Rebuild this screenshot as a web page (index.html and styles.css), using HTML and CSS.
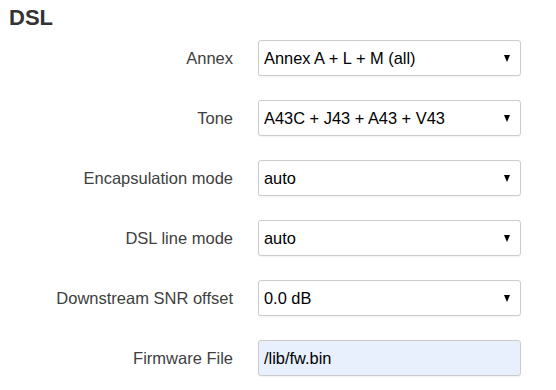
FILE: index.html
```html
<!DOCTYPE html>
<html lang="en">
<head>
    <meta charset="UTF-8">
    <meta name="viewport" content="width=device-width, initial-scale=1.0">
    <title>DSL</title>
    <link rel="stylesheet" href="styles.css">
</head>
<body>
    <div class="section">
        <h3>DSL</h3>

        <div class="field">
            <label class="field-title">Annex</label>
            <div class="select-wrap">
                <select class="field-input">
                    <option>Annex A + L + M (all)</option>
                </select>
            </div>
        </div>

        <div class="field">
            <label class="field-title">Tone</label>
            <div class="select-wrap">
                <select class="field-input">
                    <option>A43C + J43 + A43 + V43</option>
                </select>
            </div>
        </div>

        <div class="field">
            <label class="field-title">Encapsulation mode</label>
            <div class="select-wrap">
                <select class="field-input">
                    <option>auto</option>
                </select>
            </div>
        </div>

        <div class="field">
            <label class="field-title">DSL line mode</label>
            <div class="select-wrap">
                <select class="field-input">
                    <option>auto</option>
                </select>
            </div>
        </div>

        <div class="field">
            <label class="field-title">Downstream SNR offset</label>
            <div class="select-wrap">
                <select class="field-input">
                    <option>0.0 dB</option>
                </select>
            </div>
        </div>

        <div class="field">
            <label class="field-title">Firmware File</label>
            <input class="field-input filled" type="text" value="/lib/fw.bin">
        </div>
    </div>
</body>
</html>
```

FILE: styles.css
```css
body {
    margin: 0;
    padding: 0;
    background: #fff;
    font-family: 'Liberation Sans', Arial, sans-serif;
    color: #404040;
}

.section {
    padding: 4px 0 0 9px;
}

.section h3 {
    margin: 0 0 8px;
    font-size: 22px;
    line-height: 28px;
    font-weight: bold;
    color: #333;
}

.field {
    display: flex;
    align-items: center;
    margin-bottom: 24px;
}

.field-title {
    width: 224px;
    margin-right: 25px;
    text-align: right;
    font-size: 16.5px;
    color: #404040;
}

.select-wrap {
    position: relative;
}

.select-wrap::after {
    content: "";
    position: absolute;
    top: 15px;
    right: 11px;
    border-left: 3.5px solid transparent;
    border-right: 3.5px solid transparent;
    border-top: 7px solid #000;
    pointer-events: none;
}

.field-input {
    appearance: none;
    -webkit-appearance: none;
    box-sizing: border-box;
    width: 263px;
    height: 36px;
    margin: 0;
    padding: 0 24px 0 5px;
    border: 1px solid #ccc;
    border-radius: 3px;
    background: #fff;
    box-shadow: 0 1px 2px rgba(0, 0, 0, 0.06);
    font-family: 'Liberation Sans', Arial, sans-serif;
    font-size: 16.4px;
    color: #000;
    outline: none;
}

.field-input.filled {
    background: #e8f0fe;
}
```
